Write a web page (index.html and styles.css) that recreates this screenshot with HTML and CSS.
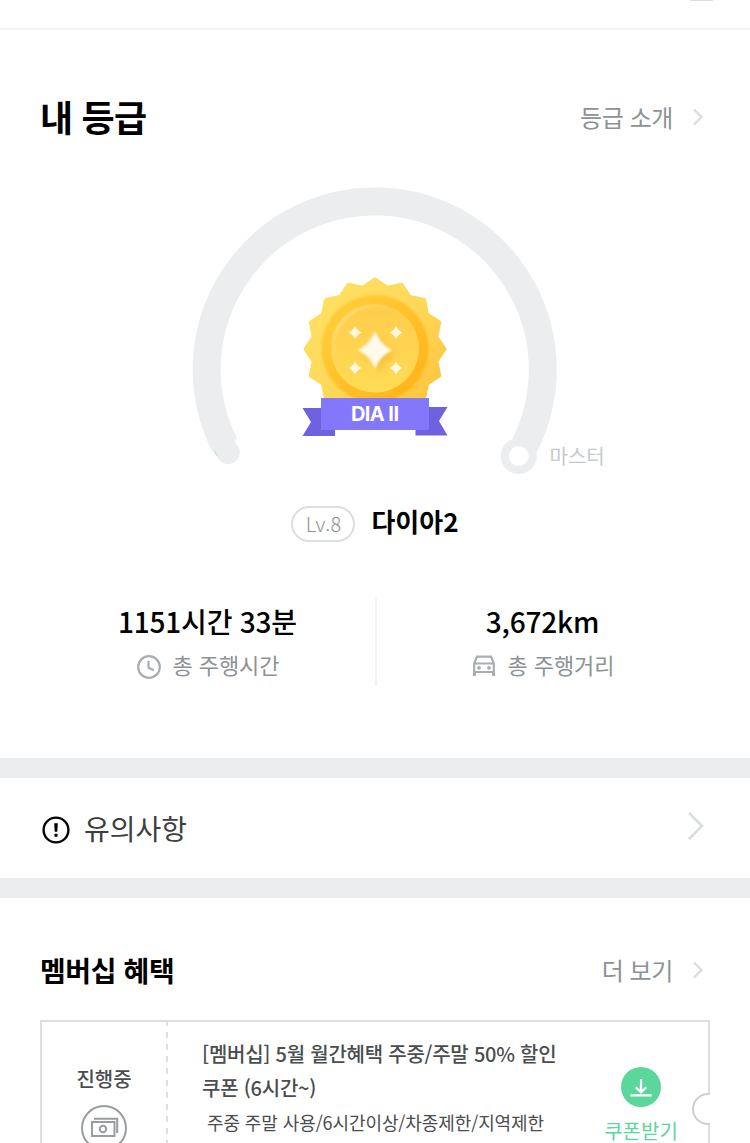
FILE: index.html
```html
<!DOCTYPE html>
<html lang="ko">

<head>
	<meta charset="UTF-8">
	<title>내 등급</title>
	<link rel="stylesheet" href="styles.css">
</head>

<body>

	<div class="topbar"><span class="menu-line"></span></div>

	<section class="grade">
		<div class="section-head">
			<h1>내 등급</h1>
			<a class="more">등급 소개
				<svg width="12" height="20" viewBox="0 0 12 20"><path d="M2 2.5 L9.5 10 L2 17.5" /></svg>
			</a>
		</div>

		<svg class="gauge" width="480" height="300" viewBox="135 182 480 300">
			<defs>
				<linearGradient id="medal" x1="0" y1="0" x2="1" y2="1">
					<stop offset="0.2" stop-color="#ffde60" />
					<stop offset="0.55" stop-color="#ffd656" />
					<stop offset="0.85" stop-color="#ffc640" />
				</linearGradient>
				<linearGradient id="ring" x1="0" y1="0" x2="1" y2="1">
					<stop offset="0.2" stop-color="#ffcb35" />
					<stop offset="0.8" stop-color="#ffb71f" />
				</linearGradient>
				<linearGradient id="disc" x1="0" y1="0" x2="0" y2="1">
					<stop offset="0" stop-color="#ffcc4c" />
					<stop offset="1" stop-color="#ffdc55" />
				</linearGradient>
				<linearGradient id="shine" x1="0" y1="0" x2="1" y2="1">
					<stop offset="0.1" stop-color="#ffe184" />
					<stop offset="0.5" stop-color="#ffd04c" stop-opacity="0" />
				</linearGradient>
				<filter id="soft" x="-20%" y="-20%" width="140%" height="140%">
					<feGaussianBlur stdDeviation="0.9" />
				</filter>
				<filter id="shadow" x="-50%" y="-50%" width="200%" height="200%">
					<feGaussianBlur stdDeviation="3" />
				</filter>
				<path id="star" d="M0 -19 Q5 -6 17 0 Q5 6 0 19 Q-5 6 -17 0 Q-5 -6 0 -19Z" />
				<path id="spark" d="M0 -6.5 Q2 -2 6.5 0 Q2 2 0 6.5 Q-2 2 -6.5 0 Q-2 -2 0 -6.5Z" />
			</defs>

			<!-- track -->
			<path class="track" d="M224.7 445 A168 168 0 1 1 518.7 456" />
			<path class="track-start" d="M212 446 L213.5 452 L219 460 L229 455 L236 445 L234 438Z" />
			<circle class="track-start" cx="228.3" cy="452.5" r="11.5" />
			<path class="progress" d="M214.2 450.5 L217 455.5" />
			<circle class="track-end" cx="518.8" cy="456" r="14" />
			<text class="next-grade" x="549.5" y="463.5">마스터</text>

			<!-- medal -->
			<polygon class="medal" transform="translate(375 349)" points="0,-69.5 12.2,-61.3 26.6,-64.2 34.7,-52 49.1,-49.1 52,-34.7 64.2,-26.6 61.3,-12.2 69.5,0 61.3,12.2 64.2,26.6 52,34.7 49.1,49.1 34.7,52 26.6,64.2 12.2,61.3 0,69.5 -12.2,61.3 -26.6,64.2 -34.7,52 -49.1,49.1 -52,34.7 -64.2,26.6 -61.3,12.2 -69.5,0 -61.3,-12.2 -64.2,-26.6 -52,-34.7 -49.1,-49.1 -34.7,-52 -26.6,-64.2 -12.2,-61.3" />
			<circle cx="375" cy="348.5" r="53.5" fill="url(#ring)" filter="url(#soft)" />
			<circle cx="375" cy="348.5" r="44" fill="url(#disc)" />
			<circle cx="375" cy="348.5" r="42.5" fill="none" stroke="url(#shine)" stroke-width="3" filter="url(#soft)" />
			<use href="#star" x="379" y="354" fill="#f0b022" opacity="0.55" filter="url(#shadow)" />
			<use href="#star" x="375" y="350" fill="#fffaea" filter="url(#soft)" />
			<g fill="#fff8e0">
				<use href="#spark" x="355" y="332.5" />
				<use href="#spark" x="396" y="332.5" />
				<use href="#spark" x="355" y="368" />
				<use href="#spark" x="396" y="368" />
			</g>

			<!-- ribbon -->
			<path fill="#6f62e1" d="M302.5 408 H335 V436 H302.5 L311 422Z M415.5 407 H447.5 L439 421 L447.5 435.5 H415.5Z" />
			<rect x="321" y="398" width="108" height="32" fill="#8577f9" />
			<text class="ribbon-text" x="351" y="421" textLength="48">DIA II</text>
		</svg>

		<div class="level">
			<span class="level-badge">Lv.8</span>
			<strong>다이아2</strong>
		</div>

		<div class="stats">
			<div class="stat">
				<div class="value">1151시간 33분</div>
				<div class="label">
					<svg class="clock" width="24" height="24" viewBox="0 0 24 24">
						<circle cx="12" cy="12" r="10.8" />
						<path d="M11.5 5.8 V12.8 L17 15.3" />
					</svg>
					<span>총 주행시간</span>
				</div>
			</div>
			<div class="stat">
				<div class="value">3,672km</div>
				<div class="label">
					<svg class="car" width="24" height="22" viewBox="0 0 24 22">
						<path d="M2.2 8.5 L5 1.6 H19 L21.8 8.5 V17 H2.2Z M2.2 8.5 H21.8" />
						<path d="M2.5 16 V21 M21.5 16 V21" stroke-width="3" />
						<circle cx="7" cy="12.8" r="1.9" />
						<circle cx="17" cy="12.8" r="1.9" />
					</svg>
					<span>총 주행거리</span>
				</div>
			</div>
		</div>
	</section>

	<section class="notice">
		<svg width="28" height="28" viewBox="0 0 28 28">
			<circle cx="14" cy="14" r="12.4" fill="none" stroke="#000" stroke-width="2.4" />
			<path d="M12.2 7.2 H15.8 L15.3 15.8 H12.7Z M12.5 17.8 H15.5 V20.8 H12.5Z" />
		</svg>
		<span>유의사항</span>
		<svg class="arrow" width="18" height="30" viewBox="0 0 18 30"><path d="M2 2 L15 15 L2 28" /></svg>
	</section>

	<section class="benefit">
		<div class="section-head">
			<h2>멤버십 혜택</h2>
			<a class="more">더 보기
				<svg width="12" height="20" viewBox="0 0 12 20"><path d="M2 2.5 L9.5 10 L2 17.5" /></svg>
			</a>
		</div>

		<div class="coupon">
			<div class="state">
				<span>진행중</span>
				<svg width="46" height="46" viewBox="0 0 46 46">
					<circle cx="23" cy="23" r="22" />
					<path d="M11 17 H33.5 V31 H11Z M13 13.8 H36.2 V28" />
					<circle cx="22" cy="24" r="3.2" />
				</svg>
			</div>
			<div class="info">
				<p class="name">[멤버십] 5월 월간혜택 주중/주말 50% 할인 쿠폰 (6시간~)</p>
				<p class="desc">주중 주말 사용/6시간이상/차종제한/지역제한</p>
			</div>
			<div class="download">
				<svg width="40" height="40" viewBox="0 0 40 40">
					<circle cx="20" cy="20" r="20" />
					<path d="M20 12 V25 M14.8 20.2 L20 25.4 L25.2 20.2 M9.3 28.3 H30.7" />
				</svg>
				<span>쿠폰받기</span>
			</div>
			<span class="notch"></span>
		</div>
	</section>

</body>

</html>
```

FILE: styles.css
```css
* {
	box-sizing: border-box;
}

body {
	margin: 0;
	height: 1143px;
	overflow: hidden;
	background-color: #fff;
	color: #000;
	font-family: "Noto Sans CJK KR", sans-serif;
}

h1,
h2,
p {
	margin: 0;
}

.topbar {
	height: 30px;
	border-bottom: 2px solid #f2f3f3;
	padding-right: 37px;
}

.menu-line {
	display: block;
	width: 23px;
	height: 1px;
	margin-left: auto;
	background-color: #ddd;
}

.section-head {
	display: flex;
	justify-content: space-between;
	align-items: center;
	height: 48px;
	padding: 0 46px 0 40px;
}

h1 {
	margin-bottom: 4px;
	font-size: 36px;
	line-height: 48px;
	letter-spacing: -0.8px;
}

h2 {
	font-size: 28px;
	line-height: 48px;
	letter-spacing: -0.4px;
}

.more {
	display: flex;
	align-items: center;
	gap: 19px;
	margin-bottom: 1px;
	font-size: 24px;
	line-height: 48px;
	letter-spacing: -0.4px;
	color: #8d9294;
}

.grade .more {
	margin-bottom: 3px;
}

.more svg {
	fill: none;
	stroke: #dadddd;
	stroke-width: 2.4;
}

.grade {
	height: 728px;
	padding-top: 64px;
}

.gauge {
	display: block;
	margin: 40px auto 0;
}

.track {
	fill: none;
	stroke: #ecedef;
	stroke-width: 28;
}

.track-start {
	fill: #ecedef;
}

.progress {
	stroke: #a5dfd3;
	stroke-width: 0.8;
}

.track-end {
	fill: #fff;
	stroke: #ecedef;
	stroke-width: 8;
}

.next-grade {
	font-size: 20px;
	fill: #c6cacc;
}

.medal {
	fill: url(#medal);
	stroke: url(#medal);
	stroke-width: 4;
	stroke-linejoin: round;
}

.ribbon-text {
	font-family: Inter, sans-serif;
	font-size: 20px;
	font-weight: 700;
	fill: #fff;
}

.level {
	display: flex;
	justify-content: center;
	align-items: center;
	gap: 16px;
	height: 36px;
	margin-top: 24px;
}

.level-badge {
	width: 64px;
	height: 36px;
	border: 2px solid #dcdfdf;
	border-radius: 18px;
	text-align: center;
	font-size: 20px;
	font-weight: 300;
	line-height: 32px;
	color: #8d9294;
}

.level strong {
	margin-bottom: 6px;
	font-size: 26px;
	line-height: 32px;
}

.stats {
	display: grid;
	grid-template-columns: 337px 333px;
	height: 88px;
	margin: 56px 40px 0;
}

.stat {
	height: 88px;
	text-align: center;
}

.stat:first-child {
	border-right: 2px solid #f2f3f3;
}

.stat:last-child {
	padding-right: 2px;
}

.value {
	font-size: 28px;
	font-weight: 500;
	line-height: 46px;
	letter-spacing: -0.2px;
}

.label {
	display: flex;
	justify-content: center;
	align-items: center;
	gap: 12px;
	height: 42px;
	padding-left: 1px;
	font-size: 22px;
	line-height: 42px;
	letter-spacing: -0.1px;
	color: #8d9294;
}

.label span {
	margin-bottom: 2px;
}

.label svg {
	fill: none;
	stroke: #a9aeb0;
	stroke-width: 2.2;
}

.label .clock {
	margin-top: 4px;
}

.label .car {
	margin-top: 2px;
}

.label .car circle {
	fill: #a9aeb0;
	stroke: none;
}

.notice {
	display: flex;
	align-items: center;
	height: 140px;
	padding: 4px 45px 0 42px;
	border-top: 20px solid #ecedef;
	border-bottom: 20px solid #ecedef;
	font-size: 28px;
	color: #3c3e40;
}

.notice span {
	margin: 0 0 4px 14px;
}

.notice .arrow {
	margin: 0 0 8px auto;
	fill: none;
	stroke: #dadddd;
	stroke-width: 2.6;
}

.benefit {
	padding-top: 48px;
}

.coupon {
	position: relative;
	display: flex;
	width: 670px;
	height: 180px;
	margin: 26px 40px 0;
	border: 2px solid #dcdfdf;
	color: #4a4d4f;
}

.state {
	display: flex;
	flex-direction: column;
	flex-shrink: 0;
	align-items: center;
	width: 126px;
	padding: 42px 2px 0 0;
	background: repeating-linear-gradient(#dcdfdf 0 4px, #fff 4px 10px, #dcdfdf 10px 12px) right / 2px 100% no-repeat;
	font-size: 20px;
	font-weight: 500;
	line-height: 30px;
}

.state svg {
	margin-top: 11px;
	fill: none;
	stroke: #999d9f;
	stroke-width: 2;
}

.info {
	flex-shrink: 0;
	width: 402px;
	padding: 15px 0 0 34px;
}

.name {
	font-size: 20px;
	font-weight: 500;
	line-height: 34px;
	letter-spacing: -0.24px;
}

.desc {
	padding-left: 5px;
	font-size: 18px;
	line-height: 34px;
	letter-spacing: -0.1px;
}

.download {
	display: flex;
	flex-direction: column;
	flex-shrink: 0;
	align-items: center;
	width: 142px;
	padding: 45px 0 0;
	font-size: 20px;
	line-height: 30px;
	color: #5bd79b;
}

.download svg {
	margin-bottom: 9px;
	fill: #5bd79b;
}

.download path {
	fill: none;
	stroke: #fff;
	stroke-width: 2.2;
}

/* half circle cut out of the right edge */
.notch {
	position: absolute;
	top: 71px;
	right: -2px;
	width: 18px;
	height: 32px;
	border: 2px solid #cbcfcf;
	border-right: 0;
	border-radius: 16px 0 0 16px;
	background-color: #fff;
}
```
